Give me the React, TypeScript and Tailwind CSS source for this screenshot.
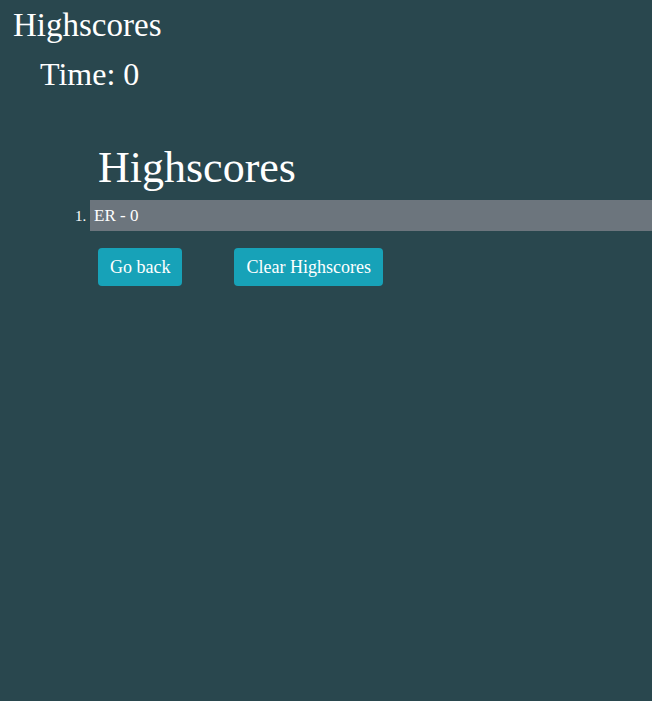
export default function App() {
  const font = { fontFamily: '"Liberation Serif", "Times New Roman", serif' };
  return (
    <div className="min-h-[701px] w-full bg-[#29474e] text-white" style={font}>
      <div className="flex flex-col">
        <div className="pl-[13px] pt-[5px] text-[33px] leading-[40px]">Highscores</div>
        <div className="pl-[40px] pt-[9px] text-[32px] leading-[40px]">Time: 0</div>
      </div>
      <div className="mt-[48px] pl-[90px]">
        <h1 className="pl-[8px] text-[44px] leading-[52px]">Highscores</h1>
        <ol className="mt-[6px] list-decimal text-[17px]">
          <li className="h-[31px] bg-[#6c757d] pl-[4px] leading-[31px] marker:text-[15px]">ER - 0</li>
        </ol>
        <div className="mt-[17px] flex gap-[52px] pl-[8px]">
          <button className="h-[38px] rounded-[4px] bg-[#17a2b8] px-[12px] text-[18px] text-white">Go back</button>
          <button className="h-[38px] rounded-[4px] bg-[#17a2b8] px-[12px] text-[18px] text-white">Clear Highscores</button>
        </div>
      </div>
    </div>
  );
}
